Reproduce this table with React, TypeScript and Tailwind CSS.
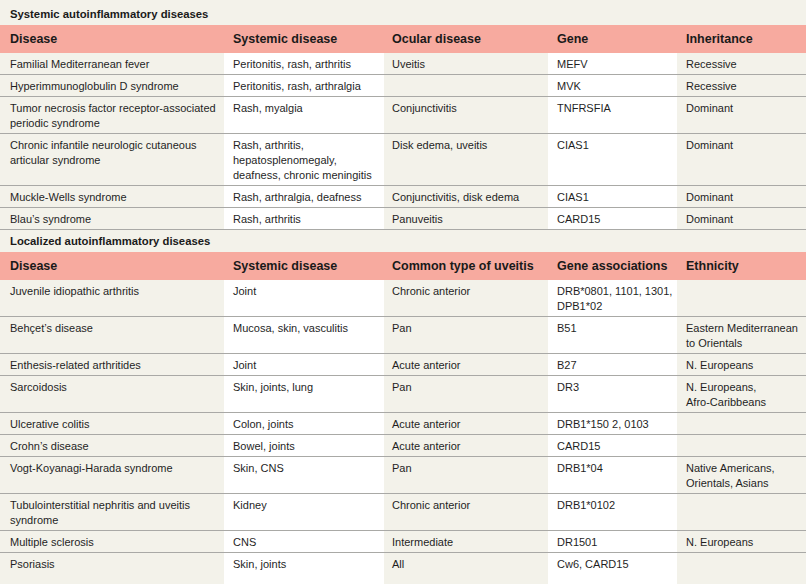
import React from "react";

type Row = { cells: string[][]; lines: number };

const t1Head = ["Disease", "Systemic disease", "Ocular disease", "Gene", "Inheritance"];
const t1Rows: Row[] = [
  { lines: 1, cells: [["Familial Mediterranean fever"], ["Peritonitis, rash, arthritis"], ["Uveitis"], ["MEFV"], ["Recessive"]] },
  { lines: 1, cells: [["Hyperimmunoglobulin D syndrome"], ["Peritonitis, rash, arthralgia"], [""], ["MVK"], ["Recessive"]] },
  { lines: 2, cells: [["Tumor necrosis factor receptor-associated", "periodic syndrome"], ["Rash, myalgia"], ["Conjunctivitis"], ["TNFRSFIA"], ["Dominant"]] },
  { lines: 3, cells: [["Chronic infantile neurologic cutaneous", "articular syndrome"], ["Rash, arthritis,", "hepatosplenomegaly,", "deafness, chronic meningitis"], ["Disk edema, uveitis"], ["CIAS1"], ["Dominant"]] },
  { lines: 1, cells: [["Muckle-Wells syndrome"], ["Rash, arthralgia, deafness"], ["Conjunctivitis, disk edema"], ["CIAS1"], ["Dominant"]] },
  { lines: 1, cells: [["Blau\u2019s syndrome"], ["Rash, arthritis"], ["Panuveitis"], ["CARD15"], ["Dominant"]] },
];

const t2Head = ["Disease", "Systemic disease", "Common type of uveitis", "Gene associations", "Ethnicity"];
const t2Rows: Row[] = [
  { lines: 2, cells: [["Juvenile idiopathic arthritis"], ["Joint"], ["Chronic anterior"], ["DRB*0801, 1101, 1301,", "DPB1*02"], [""]] },
  { lines: 2, cells: [["Beh\u00e7et\u2019s disease"], ["Mucosa, skin, vasculitis"], ["Pan"], ["B51"], ["Eastern Mediterranean", "to Orientals"]] },
  { lines: 1, cells: [["Enthesis-related arthritides"], ["Joint"], ["Acute anterior"], ["B27"], ["N. Europeans"]] },
  { lines: 2, cells: [["Sarcoidosis"], ["Skin, joints, lung"], ["Pan"], ["DR3"], ["N. Europeans,", "Afro-Caribbeans"]] },
  { lines: 1, cells: [["Ulcerative colitis"], ["Colon, joints"], ["Acute anterior"], ["DRB1*150 2, 0103"], [""]] },
  { lines: 1, cells: [["Crohn\u2019s disease"], ["Bowel, joints"], ["Acute anterior"], ["CARD15"], [""]] },
  { lines: 2, cells: [["Vogt-Koyanagi-Harada syndrome"], ["Skin, CNS"], ["Pan"], ["DRB1*04"], ["Native Americans,", "Orientals, Asians"]] },
  { lines: 2, cells: [["Tubulointerstitial nephritis and uveitis", "syndrome"], ["Kidney"], ["Chronic anterior"], ["DRB1*0102"], [""]] },
  { lines: 1, cells: [["Multiple sclerosis"], ["CNS"], ["Intermediate"], ["DR1501"], ["N. Europeans"]] },
  { lines: 2, cells: [["Psoriasis"], ["Skin, joints"], ["All"], ["Cw6, CARD15"], [""]] },
];

const grid = "grid grid-cols-[224px_160px_164px_129px_129px]";
const cellBg = ["", "bg-white", "", "bg-white", ""];
const cellPad = ["pl-[10px] pr-[6px]", "pl-[9px] pr-[6px]", "pl-[8px] pr-[6px]", "pl-[9px] pr-[6px]", "pl-[9px] pr-[6px]"];

function Title({ text }: { text: string }) {
  return (
    <div className="h-[22px] flex items-center pl-[10px] font-bold text-[11.3px] text-[#1a1a1a]">{text}</div>
  );
}

function Head({ cols }: { cols: string[] }) {
  return (
    <div className={`${grid} h-[28px] bg-[#f7aa9f] items-center font-bold text-[12.5px] text-[#1a1a1a]`}>
      {cols.map((c, i) => (
        <div key={i} className={`${cellPad[i]} whitespace-nowrap`}>{c}</div>
      ))}
    </div>
  );
}

function Body({ rows, lastNoBorder }: { rows: Row[]; lastNoBorder?: boolean }) {
  return (
    <div>
      {rows.map((r, ri) => {
        const last = lastNoBorder && ri === rows.length - 1;
        return (
          <div key={ri} className={`${grid} ${last ? "" : "border-b border-[#a9a9a6]"}`}>
            {r.cells.map((c, ci) => (
              <div key={ci} className={`${cellBg[ci]} ${cellPad[ci]} pt-[4px] pb-[2px] leading-[15px] text-[11px] text-[#1f1f1f] whitespace-nowrap`}>
                {c.map((l, li) => (
                  <div key={li} className="h-[15px]">{l}</div>
                ))}
                {Array.from({ length: r.lines - c.length }).map((_, k) => (
                  <div key={"e" + k} className="h-[15px]"></div>
                ))}
              </div>
            ))}
          </div>
        );
      })}
    </div>
  );
}

export default function App() {
  return (
    <div className="w-[806px] h-[584px] overflow-hidden bg-[#f3f2ea] font-['Liberation_Sans',Arial,sans-serif]">
      <div className="h-[25px] flex items-center pl-[10px] pt-[3px] font-bold text-[11.3px] text-[#1a1a1a]">
        Systemic autoinflammatory diseases
      </div>
      <Head cols={t1Head} />
      <Body rows={t1Rows} />
      <Title text="Localized autoinflammatory diseases" />
      <Head cols={t2Head} />
      <Body rows={t2Rows} lastNoBorder />
    </div>
  );
}
